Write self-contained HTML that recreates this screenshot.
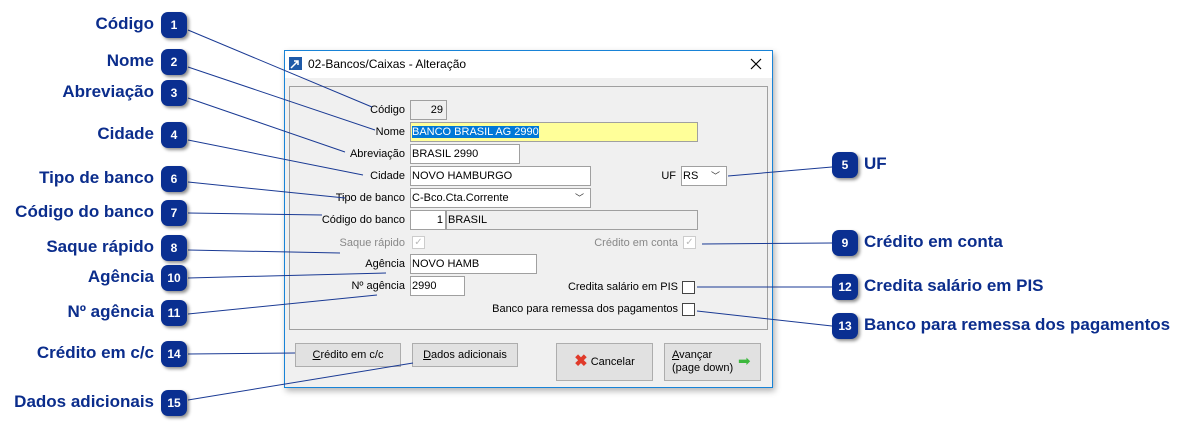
<!DOCTYPE html>
<html><head><meta charset="utf-8"><style>
body{margin:0;width:1199px;height:431px;background:#fff;position:relative;overflow:hidden;font-family:"Liberation Sans",sans-serif}
.a{position:absolute}
.b{position:absolute;width:26px;height:26px;border-radius:7px;background:#0a2f91;color:#fff;font:bold 12px "Liberation Sans",sans-serif;text-align:center;line-height:26px;box-shadow:2px 2px 3px rgba(0,0,0,.45)}
.L{position:absolute;font:bold 17px "Liberation Sans",sans-serif;color:#0b2d8c;white-space:nowrap}
.R{text-align:right}
.t{position:absolute;font-size:11px;color:#000;white-space:nowrap}
.lab{position:absolute;font-size:11px;text-align:right;white-space:nowrap}
.f{position:absolute;background:#fff;border:1px solid #a0a0a0;font-size:11px;line-height:18px;box-sizing:border-box;padding-left:1px;white-space:nowrap}
.cb{position:absolute;width:13px;height:13px;border:1px solid #444;background:#fff;box-sizing:border-box}
.btn{position:absolute;background:#e1e1e1;border:1px solid #adadad;box-sizing:border-box;font-size:11px;text-align:center}
.dd{position:absolute;right:6px;top:0px;font-size:9px;color:#333}
</style></head><body>
<div class="a" style="left:284px;top:50px;width:489px;height:338px;border:1px solid #1883d7;background:#f0f0f0;box-sizing:border-box;box-shadow:2px 3px 6px rgba(0,0,0,.3)"></div>
<div class="a" style="left:285px;top:51px;width:487px;height:27px;background:#fff"></div>
<svg class="a" style="left:289px;top:57px" width="13" height="13"><rect width="13" height="13" fill="#1e5aa8"/><path d="M2 11L9 4M5 4h4v4" stroke="#fff" stroke-width="1.5" fill="none"/></svg>
<div class="t" style="left:308px;top:57px;font-size:12px">02-Bancos/Caixas - Alteração</div>
<svg class="a" style="left:750px;top:58px" width="12" height="12"><path d="M1 1L11 11M11 1L1 11" stroke="#000" stroke-width="1.2"/></svg>
<div class="a" style="left:289px;top:86px;width:479px;height:244px;border:1px solid #a0a0a0;box-sizing:border-box"></div>

<div class="lab" style="right:794px;top:104px">Código</div>
<div class="f" style="left:410px;top:100px;width:37px;height:20px;background:#f0f0f0;text-align:right;padding-right:3px">29</div>
<div class="lab" style="right:794px;top:126px">Nome</div>
<div class="f" style="left:410px;top:122px;width:288px;height:20px;background:#ffff99"><span style="background:#0078d7;color:#fff">BANCO BRASIL AG 2990</span></div>
<div class="lab" style="right:794px;top:148px">Abreviação</div>
<div class="f" style="left:410px;top:144px;width:110px;height:20px">BRASIL 2990</div>
<div class="lab" style="right:794px;top:170px">Cidade</div>
<div class="f" style="left:410px;top:166px;width:181px;height:20px">NOVO HAMBURGO</div>
<div class="lab" style="right:523px;top:170px">UF</div>
<div class="f" style="left:681px;top:166px;width:46px;height:20px">RS<span class="dd">﹀</span></div>
<div class="lab" style="right:794px;top:192px">Tipo de banco</div>
<div class="f" style="left:410px;top:188px;width:181px;height:20px">C-Bco.Cta.Corrente<span class="dd">﹀</span></div>
<div class="lab" style="right:794px;top:214px">Código do banco</div>
<div class="f" style="left:410px;top:210px;width:36px;height:20px;text-align:right;padding-right:2px">1</div>
<div class="f" style="left:446px;top:210px;width:252px;height:20px;background:#f0f0f0">BRASIL</div>
<div class="lab" style="right:794px;top:237px;color:#888">Saque rápido</div>
<div class="cb" style="left:412px;top:236px;border-color:#ccc;color:#bbb;font-size:10px;line-height:11px;text-align:center">✓</div>
<div class="lab" style="right:521px;top:237px;color:#888">Crédito em conta</div>
<div class="cb" style="left:683px;top:236px;border-color:#ccc;color:#bbb;font-size:10px;line-height:11px;text-align:center">✓</div>
<div class="lab" style="right:794px;top:258px">Agência</div>
<div class="f" style="left:410px;top:254px;width:127px;height:20px">NOVO HAMB</div>
<div class="lab" style="right:794px;top:280px">Nº agência</div>
<div class="f" style="left:410px;top:276px;width:55px;height:20px">2990</div>
<div class="lab" style="right:521px;top:281px">Credita salário em PIS</div>
<div class="cb" style="left:682px;top:281px"></div>
<div class="lab" style="right:521px;top:303px">Banco para remessa dos pagamentos</div>
<div class="cb" style="left:682px;top:303px"></div>

<div class="btn" style="left:295px;top:343px;width:106px;height:24px;line-height:22px"><u>C</u>rédito em c/c</div>
<div class="btn" style="left:412px;top:343px;width:106px;height:24px;line-height:22px"><u>D</u>ados adicionais</div>
<div class="btn" style="left:556px;top:343px;width:97px;height:38px;line-height:36px"><span style="color:#e03a2a;font-weight:bold;font-size:16px;vertical-align:middle">✖</span> Cancelar</div>
<div class="btn" style="left:664px;top:343px;width:97px;height:38px;text-align:left;padding:5px 0 0 7px;line-height:13px"><u>A</u>vançar<br>(page down)<span class="a" style="left:73px;top:11px;color:#3db83d;font-size:15px">➡</span></div>

<svg class="a" style="left:0;top:0" width="1199" height="431"><g stroke="#1a3a94" stroke-width="1" fill="none">
<line x1="188" y1="30" x2="372" y2="107"/>
<line x1="188" y1="67" x2="375" y2="130"/>
<line x1="188" y1="98" x2="345" y2="152"/>
<line x1="188" y1="140" x2="363" y2="175"/>
<line x1="188" y1="182" x2="345" y2="198"/>
<line x1="188" y1="213" x2="322" y2="215"/>
<line x1="188" y1="250" x2="340" y2="253"/>
<line x1="188" y1="278" x2="386" y2="273"/>
<line x1="188" y1="314" x2="377" y2="295"/>
<line x1="188" y1="354" x2="295" y2="353"/>
<line x1="188" y1="400" x2="413" y2="363"/>
<line x1="832" y1="167" x2="728" y2="176"/>
<line x1="832" y1="243" x2="702" y2="244"/>
<line x1="832" y1="287" x2="697" y2="287"/>
<line x1="832" y1="326" x2="697" y2="311"/>
</g></svg>

<div class="b" style="left:161px;top:12px">1</div><div class="L R" style="right:1045px;top:14px">Código</div>
<div class="b" style="left:161px;top:49px">2</div><div class="L R" style="right:1045px;top:51px">Nome</div>
<div class="b" style="left:161px;top:80px">3</div><div class="L R" style="right:1045px;top:82px">Abreviação</div>
<div class="b" style="left:161px;top:122px">4</div><div class="L R" style="right:1045px;top:124px">Cidade</div>
<div class="b" style="left:161px;top:166px">6</div><div class="L R" style="right:1045px;top:168px">Tipo de banco</div>
<div class="b" style="left:161px;top:200px">7</div><div class="L R" style="right:1045px;top:202px">Código do banco</div>
<div class="b" style="left:161px;top:235px">8</div><div class="L R" style="right:1045px;top:237px">Saque rápido</div>
<div class="b" style="left:161px;top:265px">10</div><div class="L R" style="right:1045px;top:267px">Agência</div>
<div class="b" style="left:161px;top:300px">11</div><div class="L R" style="right:1045px;top:302px">Nº agência</div>
<div class="b" style="left:161px;top:341px">14</div><div class="L R" style="right:1045px;top:343px">Crédito em c/c</div>
<div class="b" style="left:161px;top:390px">15</div><div class="L R" style="right:1045px;top:392px">Dados adicionais</div>
<div class="b" style="left:832px;top:152px">5</div><div class="L" style="left:864px;top:154px">UF</div>
<div class="b" style="left:832px;top:230px">9</div><div class="L" style="left:864px;top:232px">Crédito em conta</div>
<div class="b" style="left:832px;top:274px">12</div><div class="L" style="left:864px;top:276px">Credita salário em PIS</div>
<div class="b" style="left:832px;top:313px">13</div><div class="L" style="left:864px;top:315px">Banco para remessa dos pagamentos</div>
</body></html>
